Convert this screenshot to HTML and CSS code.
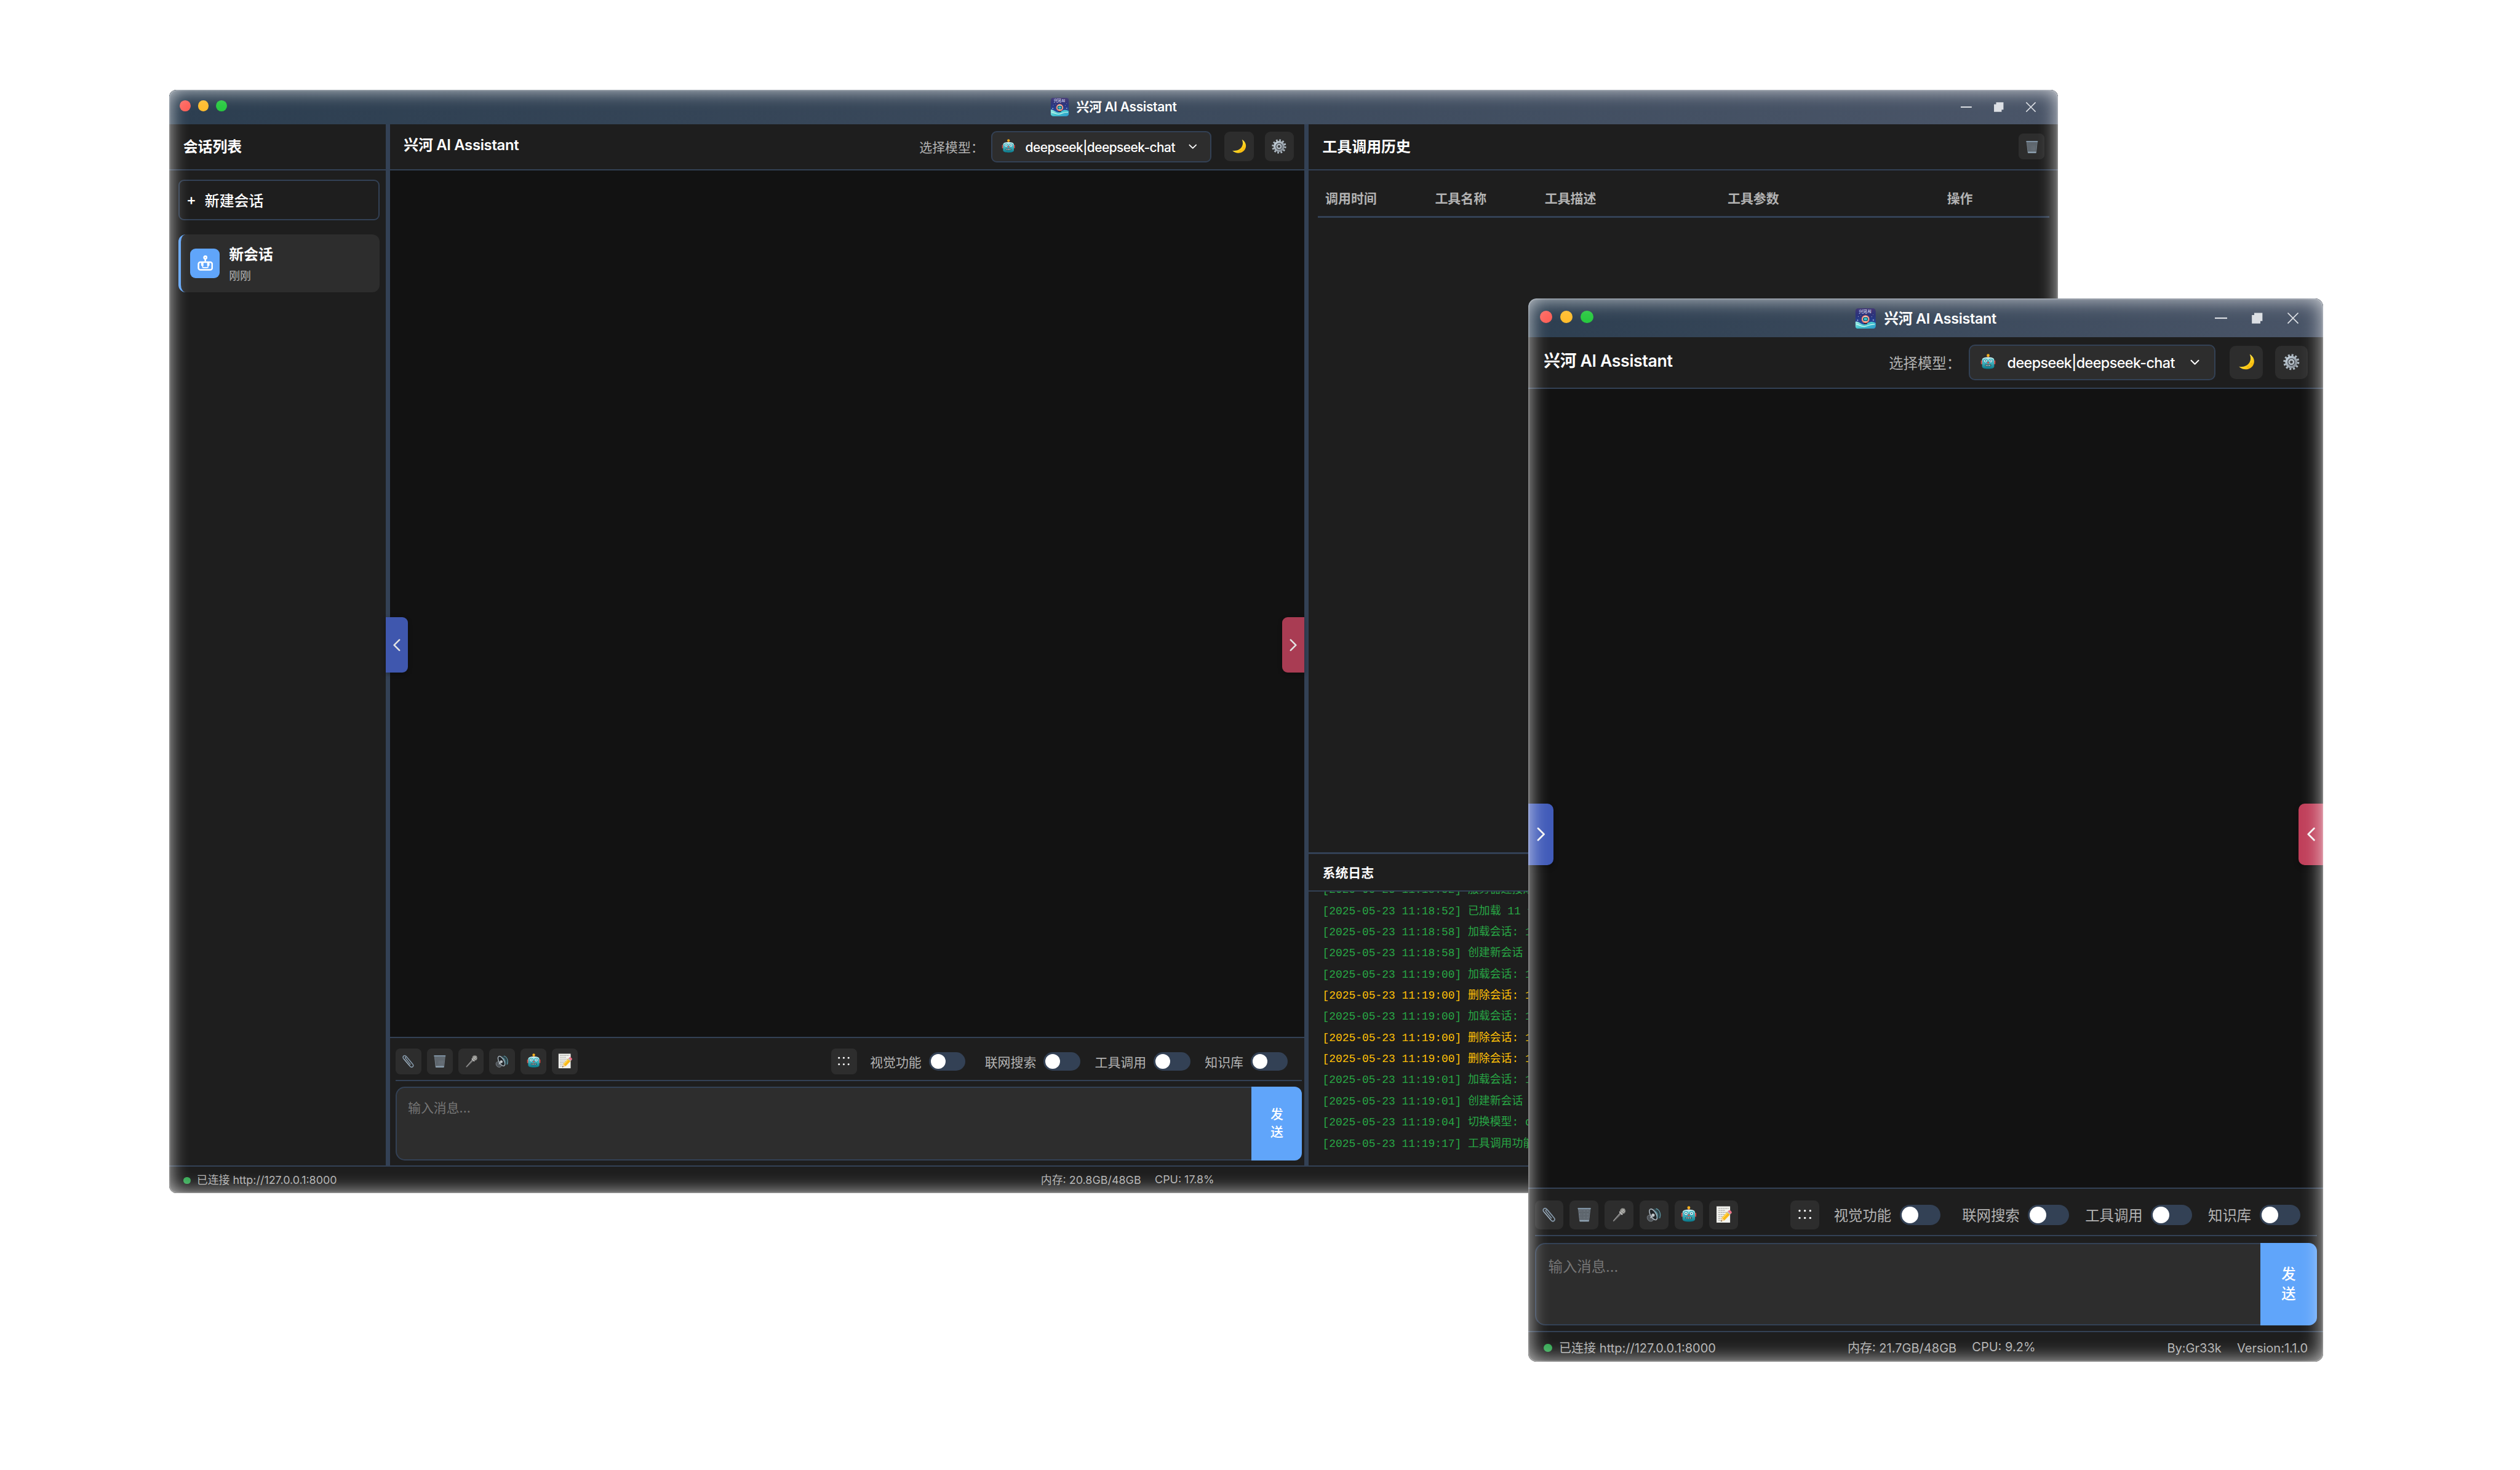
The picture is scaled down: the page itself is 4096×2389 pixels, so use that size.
FILE: index.html
```html
<!DOCTYPE html>
<html lang="zh-CN">
<head>
<meta charset="utf-8">
<title>兴河 AI Assistant</title>
<link rel="stylesheet" href="styles.css">
</head>
<body>
<svg class="sprite" aria-hidden="true">
  <defs>
    <linearGradient id="g-sky" x1="0" y1="0" x2="0" y2="1"><stop offset="0" stop-color="#2b1f63"/><stop offset=".4" stop-color="#24307c"/><stop offset="1" stop-color="#2a62b8"/></linearGradient>
    <linearGradient id="g-wave" x1="0" y1="0" x2="1" y2="1"><stop offset="0" stop-color="#a9f0e4"/><stop offset=".5" stop-color="#43c6cf"/><stop offset="1" stop-color="#2a93c9"/></linearGradient>
    <linearGradient id="g-robot" x1="0" y1="0" x2="0" y2="1"><stop offset="0" stop-color="#d6f7f6"/><stop offset=".4" stop-color="#4dbcc5"/><stop offset="1" stop-color="#067688"/></linearGradient>
    <linearGradient id="g-moon" x1="0" y1="0" x2="1" y2="1"><stop offset="0" stop-color="#fff3a0"/><stop offset=".6" stop-color="#ffd21f"/><stop offset="1" stop-color="#f0a500"/></linearGradient>
    <linearGradient id="g-gear" x1="0" y1="0" x2="1" y2="1"><stop offset="0" stop-color="#c9d6e0"/><stop offset="1" stop-color="#7d848c"/></linearGradient>
    <pattern id="p-mesh" width="1.6" height="1.6" patternUnits="userSpaceOnUse"><path d="M0 0L1.6 1.6M1.6 0L0 1.6" stroke="#8d98a2" stroke-width=".42"/></pattern>
  </defs>
  <symbol id="i-logo" viewBox="0 0 20 20">
    <rect width="20" height="20" rx="3" fill="url(#g-sky)"/>
    <text x="3.4" y="4.8" class="logo-text">兴河 AI</text>
    <g fill="#dfe8ff"><circle cx="3" cy="8" r=".3"/><circle cx="5.6" cy="6.8" r=".25"/><circle cx="16" cy="8.2" r=".3"/><circle cx="17.4" cy="6.4" r=".25"/><circle cx="2.4" cy="11.6" r=".5"/><circle cx="17.6" cy="11.4" r=".5"/></g>
    <path d="M0 13.2C2 12 4 14.2 7 15.6c3 .9 5-1.600 8-2.300 2-.4 3.500.1 5 1.200V17a3 3 0 0 1-3 3H3a3 3 0 0 1-3-3z" fill="url(#g-wave)"/>
    <path d="M1 15.500c3 .2 4 2.400 8 2.200s5-2.700 10-2" fill="none" stroke="#d5fbf2" stroke-width=".7"/>
    <rect x="8.400" y="13" width="3.200" height="2.600" rx="1" fill="#1b1f45"/>
    <circle cx="10" cy="10.600" r="3.900" fill="#f07a62"/><circle cx="10" cy="10.500" r="3" fill="#f7dcd2"/><rect x="7.500" y="8.500" width="5" height="4.100" rx="1.900" fill="#114e6b"/><rect x="8.300" y="9.300" width="3.400" height="2.500" rx="1.200" fill="#38c3c9"/>
  </symbol>
  <symbol id="i-robot" viewBox="0 0 16 16">
    <rect x=".5" y="6.800" width="1.600" height="4" rx=".6" fill="#d6453f"/><rect x="13.900" y="6.800" width="1.600" height="4" rx=".6" fill="#d6453f"/>
    <rect x="7.300" y="2" width="1.400" height="2.200" fill="#c8323a"/><circle cx="8" cy="1.700" r="1.500" fill="#f7b21f"/>
    <path d="M1.700 6.300C1.700 4.200 4.500 3.500 8 3.500s6.300.7 6.300 2.800v6.800c0 1.900-2.700 2.600-6.300 2.600s-6.300-.7-6.300-2.600z" fill="url(#g-robot)"/>
    <circle cx="5.200" cy="7.400" r="1.900" fill="#fff" stroke="#1c9fb2" stroke-width=".7"/><circle cx="10.800" cy="7.400" r="1.900" fill="#fff" stroke="#1c9fb2" stroke-width=".7"/><circle cx="5.200" cy="7.400" r=".8" fill="#2f7f95"/><circle cx="10.800" cy="7.400" r=".8" fill="#2f7f95"/>
    <path d="M8 7.700l1.200 2.200H6.800z" fill="#e5423e"/><rect x="4.900" y="11" width="6.200" height="2" rx=".5" fill="#38454d"/><path d="M5.600 12h1m.7 0h1.100m.7 0h1.100" stroke="#cfe8ea" stroke-width="1"/>
  </symbol>
  <symbol id="i-moon" viewBox="0 0 16 16">
    <path d="M11.200.5c4 2.300 5.400 6.700 3.400 10.400-2.500 4.800-9.400 5.900-13.900 1.600 4.500.7 8.500-.9 10.300-4.100C12.400 5.900 12.400 3.200 11.200.5z" fill="url(#g-moon)"/>
    <circle cx="12.800" cy="9.500" r=".7" fill="#e5a800" opacity=".5"/><circle cx="9.500" cy="12.700" r=".8" fill="#e5a800" opacity=".5"/>
  </symbol>
  <symbol id="i-gear" viewBox="0 0 16 16">
    <circle cx="8" cy="8" r="6.700" fill="none" stroke="#aebac4" stroke-width="2.200" stroke-dasharray="1.750 1.758"/>
    <circle cx="8" cy="8" r="4.900" fill="#50565d" stroke="url(#g-gear)" stroke-width="2.200"/>
    <circle cx="8" cy="8" r="2.300" fill="#70767d" stroke="#c4ced6" stroke-width="1.100"/><circle cx="8" cy="8" r="1" fill="#2d2d2d"/>
  </symbol>
  <symbol id="i-trash" viewBox="0 0 16 16">
    <path d="M1.600 1.600h12.800L12.900 15H3.100z" fill="#3b4147"/><path d="M1.600 1.600h12.800L12.900 15H3.100z" fill="url(#p-mesh)" stroke="#6f7a84" stroke-width=".6"/>
    <path d="M3 13.700h10l-.2 1.600H3.200z" fill="#8fa3b3"/><rect x=".9" y=".7" width="14.200" height="1.500" rx=".7" fill="#7f92a3"/>
  </symbol>
  <symbol id="i-clip" viewBox="0 0 16 16">
    <path d="M10.300 11.600L4.600 4.500c-1-1.300.6-2.600 1.700-1.400l6.900 8.300c1.900 2.500-1 5-3.200 2.600L2.300 5C.2 2.200 3.300-.3 5.500 2.200l5.900 7" fill="none" stroke="#8497a8" stroke-width="1.150" stroke-linecap="round"/>
    <path d="M9.700 13.400L2.700 5.200" stroke="#c6d4df" stroke-width=".5"/>
  </symbol>
  <symbol id="i-mic" viewBox="0 0 16 16">
    <path d="M9.700 5.200l1.700 1.700-8.500 8.300c-.6.400-1.400-.3-1-.9z" fill="#6c6c6c"/><path d="M9.900 5.800L2.300 14.400" stroke="#b3b3b3" stroke-width=".6"/>
    <path d="M8.800 4.700l3.100 3.200" stroke="#d8d8d8" stroke-width="1.300"/><circle cx="12.300" cy="4" r="3" fill="#8b8b88"/><path d="M10.300 3.200l3.200 3M11.400 1.800l3.200 3M10.600 5.500l3.500-3.700" stroke="#cfcfca" stroke-width=".5"/>
  </symbol>
  <symbol id="i-speaker" viewBox="0 0 16 16">
    <path d="M.9 11.500c-.4-2 1.400-3.600 3-2.700l3.600 4.400c-.1 2.500-5.800 3.100-6.600-1.700z" fill="#4e5358" stroke="#828a90" stroke-width=".6"/>
    <path d="M7.400 1.600c3.800-1 8 4.400 6.800 10.200l-3 1.400z" fill="#2f4f58" opacity=".7"/>
    <ellipse cx="7.400" cy="7.700" rx="3" ry="6.500" transform="rotate(-30 7.400 7.700)" fill="#202428" stroke="#a7b1b9" stroke-width="1.100"/>
    <circle cx="7.200" cy="8.500" r="1.700" fill="#c3c9cd"/><path d="M4.400 11.500l2.600-3" stroke="#b9c0c5" stroke-width="1.100"/>
    <path d="M9 4c2.300 1.200 3.600 4 2.600 7M10.300 1.500c3.800 1 5.700 5.600 4 10.300" fill="none" stroke="#5b95a2" stroke-width=".9"/>
  </symbol>
  <symbol id="i-memo" viewBox="0 0 16 16">
    <rect x="1.200" y=".3" width="12.800" height="15.400" fill="#f2f2ee"/><path d="M2.800 2.200h9.800M2.800 4.100h6.600M2.800 6h8M2.800 7.900h6M2.800 9.800h5M2.800 11.700h3.500M2.800 13.500h3" stroke="#a9a9a5" stroke-width=".7" stroke-dasharray="1.800 .4"/>
    <path d="M5.200 14.600l.9-3.600 5.700-5.900 2.600 2.500-5.700 5.900z" fill="#fbb917"/><path d="M6.500 11.700l5.900-6" stroke="#ffdb61" stroke-width=".8"/><path d="M11.100 5.800l1.200-1.100 2.500 2.400-1.200 1.200z" fill="#b8c0c6"/><path d="M12 5l.9-.9c.8-.7 3.300 1.500 2.500 2.400l-.9.900z" fill="#f0748a"/><path d="M5.200 14.600l.9-3.600 2.600 2.500z" fill="#f3d3a4"/><path d="M5.200 14.600l.3-1.300.9.900z" fill="#333"/>
  </symbol>
  <symbol id="i-bot" viewBox="0 0 24 24">
    <g fill="none" stroke="#fff" stroke-width="2.400" stroke-linejoin="round"><circle cx="12" cy="3.300" r="2"/><path d="M12 5.300v4"/><rect x="1.500" y="10.300" width="21" height="12" rx="3"/></g>
    <path d="M5.500 10.800h3.700v5.600H7a1.500 1.500 0 0 1-1.500-1.500zM14.800 10.800h3.700v4.100a1.500 1.500 0 0 1-1.500 1.500h-2.200z" fill="#fff"/><path d="M7.800 16.200v1.300c0 .8.500 1.200 1.200 1.200h6c.7 0 1.200-.4 1.200-1.200v-1.300" fill="none" stroke="#fff" stroke-width="1.700"/>
  </symbol>
  <symbol id="i-right" viewBox="0 0 8 14"><path d="M1.200 1.300L6.900 7l-5.700 5.700" fill="none" stroke="currentColor" stroke-width="1.700" stroke-linecap="round" stroke-linejoin="round"/></symbol>
  <symbol id="i-left" viewBox="0 0 8 14"><path d="M6.800 1.300L1.100 7l5.700 5.700" fill="none" stroke="currentColor" stroke-width="1.700" stroke-linecap="round" stroke-linejoin="round"/></symbol>
  <symbol id="i-down" viewBox="0 0 10 6"><path d="M1 .8l4 4 4-4" fill="none" stroke="currentColor" stroke-width="1.300" stroke-linecap="round" stroke-linejoin="round"/></symbol>
  <symbol id="i-min" viewBox="0 0 12 12"><path d="M0 6h12" stroke="currentColor" stroke-width="1.300"/></symbol>
  <symbol id="i-max" viewBox="0 0 12 12"><path d="M3 .9h8v8H9v2.300H.7V3H3z" fill="currentColor"/></symbol>
  <symbol id="i-close" viewBox="0 0 12 12"><path d="M.9 .9l10.200 10.200M11.100 .9L.9 11.100" stroke="currentColor" stroke-width="1.050"/></symbol>
  <symbol id="i-dots" viewBox="0 0 14 12"><g fill="#fff"><circle cx="1.800" cy="2.200" r="1"/><circle cx="7" cy="2.200" r="1"/><circle cx="12.200" cy="2.200" r="1"/><circle cx="1.800" cy="9.200" r="1"/><circle cx="7" cy="9.200" r="1"/><circle cx="12.200" cy="9.200" r="1"/></g></symbol>
</svg>

<main class="desktop">
  <section class="window window--wide">
    <header class="titlebar">
      <div class="lights"><i class="light light--red"></i><i class="light light--amber"></i><i class="light light--green"></i></div>
      <div class="titlebar__name"><svg class="logo"><use href="#i-logo"/></svg><span>兴河 AI Assistant</span></div>
      <div class="controls"><svg><use href="#i-min"/></svg><svg><use href="#i-max"/></svg><svg><use href="#i-close"/></svg></div>
    </header>
    <div class="body">
      <aside class="sidebar">
        <div class="panel-head"><h2>会话列表</h2></div>
        <div class="sidebar__list">
          <button class="new-chat"><span class="new-chat__plus">+</span>新建会话</button>
          <div class="session">
            <div class="session__icon"><svg><use href="#i-bot"/></svg></div>
            <div class="session__text"><strong>新会话</strong><span>刚刚</span></div>
          </div>
        </div>
      </aside>
      <div class="splitter"></div>
      <section class="chat">
        <div class="panel-head panel-head--chat">
          <h1>兴河 AI Assistant</h1>
          <div class="model"><span class="model__label">选择模型：</span>
            <div class="select"><svg class="select__icon"><use href="#i-robot"/></svg><span class="select__value">deepseek|deepseek-chat</span><svg class="select__arrow"><use href="#i-down"/></svg></div>
            <button class="square"><svg><use href="#i-moon"/></svg></button>
            <button class="square square--gear"><svg><use href="#i-gear"/></svg></button>
          </div>
        </div>
        <div class="messages"></div>
        <div class="composer">
          <div class="toolbar">
            <div class="tools">
              <button class="tool"><svg><use href="#i-clip"/></svg></button><button class="tool"><svg><use href="#i-trash"/></svg></button><button class="tool"><svg><use href="#i-mic"/></svg></button><button class="tool"><svg><use href="#i-speaker"/></svg></button><button class="tool tool--up"><svg><use href="#i-robot"/></svg></button><button class="tool tool--memo"><svg><use href="#i-memo"/></svg></button>
            </div>
            <div class="switches">
              <button class="tool tool--dots"><svg><use href="#i-dots"/></svg></button>
              <label class="switch switch--first">视觉功能<i></i></label><label class="switch">联网搜索<i></i></label><label class="switch">工具调用<i></i></label><label class="switch">知识库<i></i></label>
            </div>
          </div>
          <div class="entry"><div class="entry__field">输入消息...</div><button class="entry__send"><span>发</span><span>送</span></button></div>
        </div>
      </section>
      <div class="splitter"></div>
      <aside class="history">
        <div class="panel-head panel-head--history"><h2>工具调用历史</h2><button class="tool"><svg><use href="#i-trash"/></svg></button></div>
        <div class="history__body">
          <div class="table-head"><span>调用时间</span><span>工具名称</span><span>工具描述</span><span>工具参数</span><span>操作</span></div>
        </div>
        <div class="log">
          <h3>系统日志</h3>
          <div class="log__lines">
            <p>[2025-05-23 11:18:52] 服务器连接成功</p>
            <p>[2025-05-23 11:18:52] 已加载 11 个会话</p>
            <p>[2025-05-23 11:18:58] 加载会话: 1</p>
            <p>[2025-05-23 11:18:58] 创建新会话</p>
            <p>[2025-05-23 11:19:00] 加载会话: 1</p>
            <p class="warn">[2025-05-23 11:19:00] 删除会话: 1</p>
            <p>[2025-05-23 11:19:00] 加载会话: 1</p>
            <p class="warn">[2025-05-23 11:19:00] 删除会话: 1</p>
            <p class="warn">[2025-05-23 11:19:00] 删除会话: 1</p>
            <p>[2025-05-23 11:19:01] 加载会话: 1</p>
            <p>[2025-05-23 11:19:01] 创建新会话</p>
            <p>[2025-05-23 11:19:04] 切换模型: deepseek</p>
            <p>[2025-05-23 11:19:17] 工具调用功能已关闭</p>
          </div>
        </div>
      </aside>
      <button class="handle handle--left"><svg><use href="#i-left"/></svg></button>
      <button class="handle handle--right"><svg><use href="#i-right"/></svg></button>
    </div>
    <footer class="status">
      <div class="status__group status__group--link"><i class="status__dot"></i><span>已连接 http://127.0.0.1:8000</span></div>
      <div class="status__group"><span>内存: 20.8GB/48GB</span><span class="status__cpu">CPU: 17.8%</span></div>
      <div class="status__group"><span>By:Gr33k</span><span>Version:1.1.0</span></div>
    </footer>
  </section>

  <section class="window window--narrow">
    <header class="titlebar">
      <div class="lights"><i class="light light--red"></i><i class="light light--amber"></i><i class="light light--green"></i></div>
      <div class="titlebar__name"><svg class="logo"><use href="#i-logo"/></svg><span>兴河 AI Assistant</span></div>
      <div class="controls"><svg><use href="#i-min"/></svg><svg><use href="#i-max"/></svg><svg><use href="#i-close"/></svg></div>
    </header>
    <div class="body">
      <section class="chat">
        <div class="panel-head panel-head--chat">
          <h1>兴河 AI Assistant</h1>
          <div class="model"><span class="model__label">选择模型：</span>
            <div class="select"><svg class="select__icon"><use href="#i-robot"/></svg><span class="select__value">deepseek|deepseek-chat</span><svg class="select__arrow"><use href="#i-down"/></svg></div>
            <button class="square"><svg><use href="#i-moon"/></svg></button>
            <button class="square square--gear"><svg><use href="#i-gear"/></svg></button>
          </div>
        </div>
        <div class="messages"></div>
        <div class="composer">
          <div class="toolbar">
            <div class="tools">
              <button class="tool"><svg><use href="#i-clip"/></svg></button><button class="tool"><svg><use href="#i-trash"/></svg></button><button class="tool"><svg><use href="#i-mic"/></svg></button><button class="tool"><svg><use href="#i-speaker"/></svg></button><button class="tool tool--up"><svg><use href="#i-robot"/></svg></button><button class="tool tool--memo"><svg><use href="#i-memo"/></svg></button>
            </div>
            <div class="switches">
              <button class="tool tool--dots"><svg><use href="#i-dots"/></svg></button>
              <label class="switch switch--first">视觉功能<i></i></label><label class="switch">联网搜索<i></i></label><label class="switch">工具调用<i></i></label><label class="switch">知识库<i></i></label>
            </div>
          </div>
          <div class="entry"><div class="entry__field">输入消息...</div><button class="entry__send"><span>发</span><span>送</span></button></div>
        </div>
      </section>
      <button class="handle handle--left"><svg><use href="#i-right"/></svg></button>
      <button class="handle handle--right"><svg><use href="#i-left"/></svg></button>
    </div>
    <footer class="status">
      <div class="status__group status__group--link"><i class="status__dot"></i><span>已连接 http://127.0.0.1:8000</span></div>
      <div class="status__group"><span>内存: 21.7GB/48GB</span><span class="status__cpu">CPU: 9.2%</span></div>
      <div class="status__group"><span>By:Gr33k</span><span>Version:1.1.0</span></div>
    </footer>
  </section>
</main>
</body>
</html>
```
FILE: styles.css
```css
:root {
  --panel: #1e1e1e;
  --canvas: #121212;
  --control: #2d2d2d;
  --line: #334155;
  --accent: #60a5fa;
  --muted: #b3b3b3;
  --hair: 1.36px;
}
* { box-sizing: border-box; }
html, body { height: 100%; margin: 0; overflow: hidden; background: #fff; }
body { font-family: Inter, "Noto Sans CJK SC", sans-serif; color: #fff; }
h1, h2, h3, p { margin: 0; }
button { padding: 0; border: 0; color: inherit; font: inherit; }
svg { display: block; flex: none; }
.sprite { position: absolute; width: 0; height: 0; }
.logo-text { font: 500 4.200px "Noto Sans CJK SC", sans-serif; fill: #d9dcf5; }

.desktop { position: relative; height: 100%; }
.window {
  position: absolute;
  display: flex;
  flex-direction: column;
  overflow: hidden;
  border-radius: 8px;
  background: var(--panel);
}
/* soft light running round the inside of the frame */
.window::after {
  content: "";
  position: absolute;
  inset: 0;
  border-radius: inherit;
  box-shadow: inset 0 0 0 1.300px rgba(255, 255, 255, .16), inset 0 0 20px rgba(255, 255, 255, .78);
  pointer-events: none;
}
.window--wide { left: 184.200px; top: 97.400px; width: 2054.400px; height: 1200.200px; zoom: 1.49416; --edge: 2.200px; --head-edge: 11px; }
.window--narrow { left: 1487.200px; top: 290.400px; width: 773.400px; height: 1034.600px; zoom: 1.67047; --edge: 6.200px; --head-edge: 15px; }

.titlebar {
  position: relative;
  display: flex;
  align-items: center;
  justify-content: space-between;
  flex: none;
  height: 37.800px;
  padding: 0 23.500px 0 11px;
  background: linear-gradient(135deg, #2c3e50, #4a5568);
}
.lights { display: flex; gap: 8px; margin-top: -2px; }
.light { width: 12px; height: 12px; border-radius: 50%; }
.light--red { background: #ff5f57; }
.light--amber { background: #ffbd2e; }
.light--green { background: #28c940; }
.titlebar__name { display: flex; align-items: center; gap: 8px; position: absolute; left: 50%; top: 9.300px; transform: translateX(-50%); font-size: 14px; font-weight: 600; line-height: 20px; letter-spacing: -.22px; white-space: nowrap; }
.logo { width: 20px; height: 20px; }
.controls { display: flex; gap: 23px; color: #dcdfe4; }
.controls svg { width: 12px; height: 12px; }

.body { position: relative; display: flex; flex: 1; min-height: 0; }
.splitter { flex: none; width: 4.900px; background: var(--line); }
.sidebar { flex: none; width: 235.200px; }
.panel-head { display: flex; align-items: center; justify-content: space-between; height: 50px; padding-left: 15px; border-bottom: var(--hair) solid var(--line); background: var(--panel); }
.panel-head h1, .panel-head h2 { font-size: 16px; font-weight: 600; line-height: 24px; white-space: nowrap; }
.panel-head h1 { margin-bottom: 3px; letter-spacing: -.22px; }
.panel-head h2 { padding-top: 1px; }
.panel-head--chat { padding-right: var(--head-edge); }
.panel-head--history { padding-right: 14.400px; }
.sidebar__list { display: flex; flex-direction: column; gap: 15px; padding: 10.200px 6.200px 0 10.200px; }
.new-chat { display: flex; align-items: center; height: 44.500px; padding: 0 0 1.400px 7px; border: var(--hair) solid var(--line); border-radius: 6px; background: transparent; font-size: 16px; font-weight: 500; }
.new-chat__plus { width: 20px; text-align: left; }
.session { display: flex; align-items: center; gap: 10px; height: 63.100px; padding-left: 10px; border-left: 3px solid var(--accent); border-radius: 8px; background: var(--control); }
.session__icon { display: grid; place-items: center; width: 32px; height: 32px; border-radius: 6px; background: var(--accent); }
.session__icon svg { width: 17px; height: 17px; }
.session__text { display: flex; flex-direction: column; padding-top: 2px; }
.session__text strong { font-size: 16px; font-weight: 600; line-height: 26px; }
.session__text span { color: var(--muted); font-size: 12px; line-height: 20px; }

.chat { display: flex; flex: 1; flex-direction: column; min-width: 0; background: var(--canvas); }
.messages { flex: 1; }
.model { display: flex; align-items: center; font-size: 14px; }
.model__label { margin-right: 8px; color: var(--muted); white-space: nowrap; }
.select { display: flex; align-items: center; width: 239.700px; height: 34.500px; margin-right: 14px; padding: 0 14.500px 0 10px; border: var(--hair) solid var(--line); border-radius: 6px; background: var(--control); }
.select__icon { width: 15px; height: 15px; margin: -2px 11px 0 0; }
.select__value { flex: 1; padding-top: 1px; font-weight: 500; letter-spacing: -.36px; white-space: nowrap; }
.select__arrow { width: 9px; height: 6px; }
.square { display: grid; place-items: center; width: 32px; height: 32px; border-radius: 6px; background: var(--control); }
.square svg { width: 16px; height: 16px; margin-top: -1px; }
.square--gear { margin-left: 12px; }

.composer { height: 140px; padding: 11.600px var(--edge) 0 6.100px; border-top: var(--hair) solid var(--line); background: var(--panel); }
.toolbar { display: flex; justify-content: space-between; height: 35px; border-bottom: var(--hair) solid var(--line); }
.tools { display: flex; gap: 6px; }
.tool { display: grid; place-items: center; flex: none; width: 28px; height: 28px; border-radius: 5px; background: var(--control); }
.tool svg { width: 14.500px; height: 14.500px; }
.tool--up svg { width: 15.500px; height: 15.500px; margin-top: -2px; }
.tool--memo svg { width: 16.500px; height: 16.500px; margin-top: -1px; }
.tool--dots svg { width: 14px; height: 12px; }
.switches { display: flex; gap: 15.700px; padding-right: 15.900px; }
.switch { display: flex; align-items: center; gap: 8px; height: 28px; color: var(--muted); font-size: 14px; white-space: nowrap; }
.switch--first { margin: 0 5.200px 0 -1.400px; }
.switch i { width: 40px; height: 20px; padding: 2px; border-radius: 10px; background: var(--line); }
.switch i::before { content: ""; display: block; width: 16px; height: 16px; border-radius: 50%; background: #fff; }
.entry { display: flex; height: 80px; margin-top: 6.300px; }
.entry__field { flex: 1; padding: 11.500px 12px; border: var(--hair) solid var(--line); border-right: 0; border-radius: 10px 0 0 10px; background: var(--control); color: #757575; font-size: 14px; line-height: 21px; }
.entry__send { display: flex; flex-direction: column; justify-content: center; align-items: center; width: 55px; border-radius: 0 8px 8px 0; background: var(--accent); font-size: 14px; font-weight: 500; line-height: 19px; }

.history { display: flex; flex: none; flex-direction: column; width: 815px; }
.history__body { flex: 1; padding: 10px 9.200px 0 10.100px; }
.table-head { display: grid; grid-template-columns: 15fr 15fr 25fr 30fr 15fr; align-items: center; height: 42px; padding-bottom: 1.200px; border-bottom: 2.100px solid var(--line); color: var(--muted); font-size: 14px; font-weight: 600; }
.table-head span { padding-left: 8px; }
.log { display: flex; flex: none; flex-direction: column; height: 341px; border-top: 2.100px solid var(--line); }
.log h3 { flex: none; height: 41px; padding-left: 15px; border-bottom: var(--hair) solid var(--line); font-size: 14px; font-weight: 600; line-height: 41px; }
.log__lines { display: flex; flex: 1; flex-direction: column; justify-content: flex-end; overflow: hidden; padding: 0 15px 12.200px; color: #28a745; font: 12px "Liberation Mono", "Noto Sans CJK SC", monospace; }
.log__lines p { flex: none; height: 23px; line-height: 23px; white-space: pre; }
.log__lines .warn { color: #ffc107; }

.handle { position: absolute; top: 50%; display: grid; place-items: center; width: 24px; height: 60px; margin-top: -30px; color: #e3e3e3; box-shadow: 0 2px 5px rgba(0, 0, 0, .3); }
.handle svg { width: 8px; height: 14px; }
.handle--left { left: 235.200px; border-radius: 0 6px 6px 0; background: #3f57ae; }
.handle--right { right: 819.900px; border-radius: 6px 0 0 6px; background: #a93c53; }
.window--narrow .handle { color: #f4f4f4; }
.window--narrow .handle--left { left: 0; width: 24.500px; background: #415bb9; }
.window--narrow .handle--right { right: 0; background: #c03f5a; }

.status { display: flex; align-items: center; justify-content: space-between; flex: none; height: 29.900px; padding: 1.400px 15px 0; border-top: var(--hair) solid var(--line); color: var(--muted); font-size: 12px; line-height: 18px; white-space: nowrap; }
.status__group { display: flex; align-items: center; gap: 15px; }
.status__group--link { gap: 6.800px; }
.status__dot { width: 8px; height: 8px; border-radius: 50%; background: #34a853; }
.status__cpu { margin-top: -2px; }
```
